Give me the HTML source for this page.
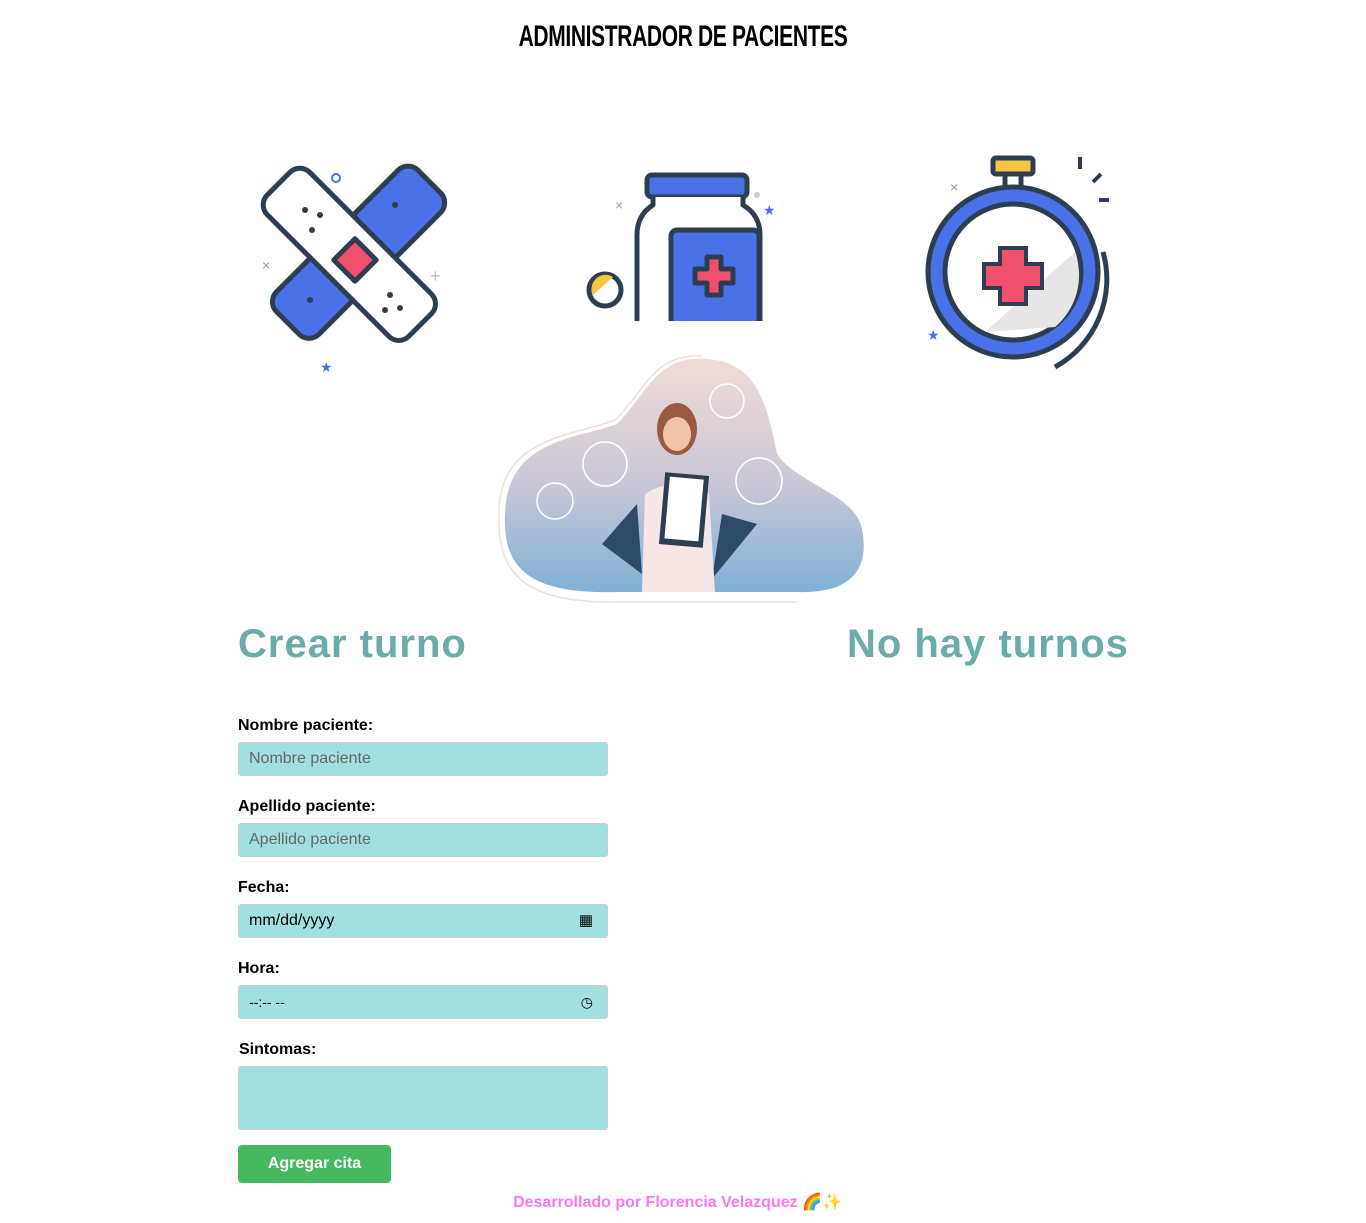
<!DOCTYPE html>
<html><head><meta charset="utf-8"><style>
body{margin:0;background:#fff;font-family:"Liberation Sans",sans-serif;width:1366px;height:1223px;position:relative;overflow:hidden}
.abs{position:absolute}
h1{position:absolute;left:0;width:1366px;top:20px;margin:0;text-align:center;font-family:"Liberation Sans",sans-serif;font-weight:bold;font-size:30px;letter-spacing:-0.5px;transform:scale(0.7,1.0);color:#000}
h2{position:absolute;margin:0;font-size:40px;font-weight:bold;color:#6aaca8;letter-spacing:1px}
label{position:absolute;left:238px;font-weight:bold;font-size:16px;color:#000}
.in{position:absolute;left:238px;height:32px;background:#a0e0de;border:1px solid #ccc;border-radius:3px;font-size:16px;color:#666;line-height:32px;padding-left:10px;box-sizing:content-box;width:358px}
</style></head><body>
<h1>ADMINISTRADOR DE PACIENTES</h1>

<svg class="abs" style="left:250px;top:160px" width="210" height="215" viewBox="0 0 210 215">
<g stroke="#2d3e50" stroke-width="5" stroke-linejoin="round">
<rect x="72" y="-8" width="60" height="200" rx="14" fill="#4a72e8" transform="rotate(45 105 100)"/>
<rect x="75" y="-8" width="60" height="200" rx="14" fill="#fff" transform="rotate(-45 105 100)"/>
<rect x="90" y="85" width="30" height="30" fill="#f0506e" transform="rotate(45 105 100)"/>
</g>
<g fill="#2d3e50"><circle cx="55" cy="50" r="3"/><circle cx="70" cy="55" r="3"/><circle cx="62" cy="70" r="3"/><circle cx="140" cy="135" r="3"/><circle cx="150" cy="148" r="3"/><circle cx="135" cy="150" r="3"/><circle cx="145" cy="45" r="3"/><circle cx="60" cy="140" r="3"/></g>
<circle cx="86" cy="18" r="4" fill="none" stroke="#4a72e8" stroke-width="2"/>
<text x="12" y="110" fill="#999" font-size="14">×</text><text x="180" y="122" fill="#bbb" font-size="18">+</text>
<text x="70" y="212" fill="#4a72e8" font-size="14">★</text>
</svg>

<svg class="abs" style="left:585px;top:155px" width="195" height="166" viewBox="0 0 195 166">
<g stroke="#2d3e50" stroke-width="5" stroke-linejoin="round">
<rect x="62" y="20" width="100" height="22" rx="5" fill="#4a72e8"/>
<path d="M68 42 L68 50 Q52 60 52 80 L52 170 L175 170 L175 80 Q175 60 158 50 L158 42" fill="#fff"/>
<rect x="86" y="75" width="88" height="100" rx="6" fill="#4a72e8"/>
<path d="M122 102h14v12h12v14h-12v12h-14v-12h-12v-14h12z" fill="#f0506e"/>
<circle cx="20" cy="135" r="16" fill="#fff"/>
</g>
<path d="M8 140 A14 14 0 0 1 28 122 Z" fill="#f5c542"/>
<circle cx="172" cy="40" r="3" fill="#ccc"/><text x="178" y="60" fill="#4a72e8" font-size="14">★</text>
<text x="30" y="55" fill="#999" font-size="14">×</text>
</svg>

<svg class="abs" style="left:905px;top:152px" width="210" height="220" viewBox="0 0 210 220">
<rect x="88" y="6" width="40" height="16" rx="3" fill="#f5c542" stroke="#2d3e50" stroke-width="5"/>
<rect x="100" y="22" width="16" height="14" fill="#fff" stroke="#2d3e50" stroke-width="5"/>
<circle cx="108" cy="120" r="85" fill="#4a72e8" stroke="#2d3e50" stroke-width="5"/>
<circle cx="108" cy="120" r="68" fill="#fff" stroke="#2d3e50" stroke-width="5"/>
<path d="M150 175 A68 68 0 0 0 170 100 L80 180 Z" fill="#e6e6e6"/>
<path d="M95 96h26v16h16v24h-16v16h-26v-16h-16v-24h16z" fill="#f0506e" stroke="#2d3e50" stroke-width="4"/>
<path d="M150 215 A100 100 0 0 0 198 100" fill="none" stroke="#2d3e50" stroke-width="5"/>
<path d="M175 5v12M188 30l8-8M194 48h10" stroke="#2d3e50" stroke-width="4"/>
<text x="45" y="40" fill="#999" font-size="14">×</text><text x="22" y="188" fill="#4a72e8" font-size="14">★</text>
</svg>

<svg class="abs" style="left:497px;top:354px" width="370" height="252" viewBox="0 0 370 252">
<defs><linearGradient id="g" x1="0" y1="0" x2="0" y2="1"><stop offset="0" stop-color="#f0dcd6"/><stop offset="0.55" stop-color="#c9c6d6"/><stop offset="1" stop-color="#7fb1d6"/></linearGradient></defs>
<path d="M210 5 C160 0 150 40 120 70 C80 85 10 85 8 160 C5 220 40 240 120 238 L300 238 C360 240 372 210 365 175 C358 140 300 130 280 100 C270 50 260 8 210 5Z" fill="url(#g)"/>
<path d="M205 2 C155 0 148 38 118 66 C78 82 0 82 2 162 C0 230 40 250 130 248 L300 248" fill="none" stroke="#f0dcd6" stroke-width="1.5"/>
<g fill="none" stroke="#fff" stroke-width="1.5"><circle cx="230" cy="47" r="17"/><circle cx="108" cy="110" r="22"/><circle cx="262" cy="127" r="23"/><circle cx="58" cy="147" r="18"/></g>
<path d="M105 190 L140 150 L145 220Z M260 170 L225 160 L215 225Z" fill="#2d4a66"/>
<path d="M148 140 Q180 120 212 140 L218 238 L145 238Z" fill="#f7e6e6"/>
<ellipse cx="180" cy="75" rx="20" ry="26" fill="#9a5a40"/>
<ellipse cx="180" cy="80" rx="14" ry="17" fill="#f3c3a8"/>
<rect x="165" y="120" width="44" height="72" fill="#2d3e50" transform="rotate(5 187 156)"/>
<rect x="170" y="124" width="34" height="62" fill="#fff" transform="rotate(5 187 156)"/>
</svg>

<h2 style="left:238px;top:622px">Crear turno</h2>
<h2 style="left:847px;top:622px">No hay turnos</h2>

<label style="top:717px">Nombre paciente:</label>
<div class="in" style="top:742px">Nombre paciente</div>
<label style="top:798px">Apellido paciente:</label>
<div class="in" style="top:823px">Apellido paciente</div>
<label style="top:879px">Fecha:</label>
<div class="in" style="top:904px;color:#000">mm/dd/yyyy<span style="position:absolute;right:14px;top:0;font-size:15px">▦</span></div>
<label style="top:960px">Hora:</label>
<div class="in" style="top:985px;color:#000;font-size:14px">--:-- --<span style="position:absolute;right:14px;top:0;font-size:14px">◷</span></div>
<label style="top:1041px;left:239px">Sintomas:</label>
<div class="in" style="top:1066px;height:62px"></div>
<div class="abs" style="left:238px;top:1145px;width:153px;height:38px;background:#46b85f;border-radius:4px;color:#fff;font-weight:bold;font-size:16px;text-align:center;line-height:38px">Agregar cita</div>
<div class="abs" style="left:0;width:1355px;top:1192px;text-align:center;color:#ff77ee;font-weight:bold;font-size:16px">Desarrollado por Florencia Velazquez 🌈✨</div>
</body></html>
